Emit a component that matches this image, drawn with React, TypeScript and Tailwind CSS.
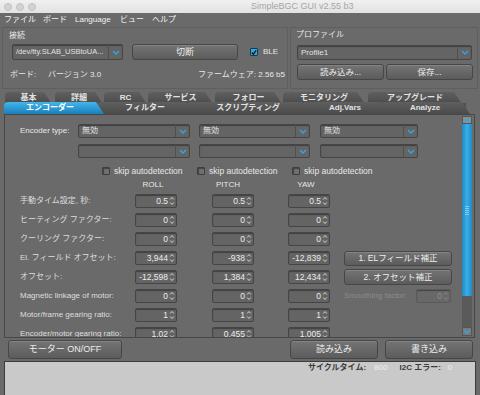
import React from 'react';

const F = "font-['Liberation_Sans','Noto_Sans_CJK_JP',sans-serif]";

const Chevron = ({ up = false }: { up?: boolean }) => (
  <svg width="8" height="5" viewBox="0 0 8 5" fill="none">
    <path d={up ? 'M1 4l3-3 3 3' : 'M1 1l3 3 3-3'} stroke="#2ea8e8" strokeWidth="1.4" />
  </svg>
);

const SpinArrows = ({ dim = false }: { dim?: boolean }) => (
  <svg width="6" height="12" viewBox="0 0 6 12" fill="none">
    <path d="M1.2 4.5l1.8-2 1.8 2" stroke={dim ? '#8a8a8a' : '#d4d4d4'} strokeWidth="1" />
    <path d="M1.2 7.5l1.8 2 1.8-2" stroke={dim ? '#8a8a8a' : '#d4d4d4'} strokeWidth="1" />
  </svg>
);

const Combo = ({ cls, text = '' }: { cls: string; text?: string }) => (
  <div className={`${cls} flex border border-[#454545] rounded-[2px] bg-[#646464] shadow-[inset_0_1px_1px_rgba(0,0,0,0.35)]`}>
    <div className="flex-1 flex items-center pl-[3px] text-[#e2e2e2] whitespace-nowrap overflow-hidden">{text}</div>
    <div className="w-[14px] border-l border-[#505050] flex items-center justify-center">
      <Chevron />
    </div>
  </div>
);

const Spin = ({ cls = 'w-[42px]', value, dim = false }: { cls?: string; value: string; dim?: boolean }) => (
  <div
    className={`${cls} h-[14px] flex border rounded-[2px] shadow-[inset_0_1px_1px_rgba(0,0,0,0.35)] ${
      dim ? 'border-[#5a5a5a] bg-[#686868] text-[#8e8e8e]' : 'border-[#454545] bg-[#646464] text-[#ececec]'
    }`}
  >
    <div className="flex-1 flex items-center justify-end text-[8.5px] whitespace-nowrap">{value}</div>
    <div className="w-[8px] flex items-center justify-center">
      <SpinArrows dim={dim} />
    </div>
  </div>
);

const Btn = ({ cls, label }: { cls: string; label: string }) => (
  <div
    className={`${cls} flex items-center justify-center rounded-[3px] border border-[#464646] bg-linear-to-b from-[#747474] to-[#5c5c5c] shadow-[inset_0_1px_0_rgba(255,255,255,0.12)] text-[#ededed] whitespace-nowrap`}
  >
    {label}
  </div>
);

const Check = ({ on = false }: { on?: boolean }) => (
  <div
    className={`w-[8px] h-[8px] shrink-0 rounded-[1px] border flex items-center justify-center ${
      on ? 'border-[#1e3a4a] bg-[#2ea8e8]' : 'border-[#3e3e3e] bg-[#707070] shadow-[inset_1px_1px_1px_rgba(0,0,0,0.4)]'
    }`}
  >
    {on && (
      <svg width="7" height="7" viewBox="0 0 7 7" fill="none">
        <path d="M1 3.5l1.8 2L6 1" stroke="#111" strokeWidth="1.4" />
      </svg>
    )}
  </div>
);

const Tab = ({ cls, label, active = false, z }: { cls: string; label: string; active?: boolean; z: number }) => (
  <div
    className={`${cls} relative h-full shrink-0 rounded-tl-[4px] flex items-center justify-center font-bold whitespace-nowrap [clip-path:polygon(0_0,calc(100%_-_8px)_0,100%_100%,0_100%)] ${
      active
        ? 'bg-linear-to-b from-[#42b6ec] to-[#1a7fba] text-white'
        : 'bg-linear-to-b from-[#5f5f5f] to-[#4b4b4b] text-[#e2e2e2]'
    }`}
    style={{ zIndex: z }}
  >
    {label}
  </div>
);

const rows: { label: string; v: [string, string, string] }[] = [
  { label: '手動タイム設定, 秒:', v: ['0.5', '0.5', '0.5'] },
  { label: 'ヒーティング ファクター:', v: ['0', '0', '0'] },
  { label: 'クーリング ファクター:', v: ['0', '0', '0'] },
  { label: 'El. フィールド オフセット:', v: ['3,944', '-938', '-12,839'] },
  { label: 'オフセット:', v: ['-12,598', '1,384', '12,434'] },
  { label: 'Magnetic linkage of motor:', v: ['0', '0', '0'] },
  { label: 'Motor/frame gearing ratio:', v: ['1', '1', '1'] },
  { label: 'Encoder/motor gearing ratio:', v: ['1.02', '0.455', '1.005'] },
];

export default function App() {
  return (
    <div className={`w-[480px] h-[395px] overflow-hidden bg-[#6a6a6a] text-[8px] leading-none text-[#e8e8e8] flex flex-col ${F}`}>
      {/* title bar */}
      <div className="h-[13px] shrink-0 flex items-center pl-[4px] bg-linear-to-b from-[#f0f0f0] to-[#e2e2e2]">
        <div className="w-[8px] h-[8px] rounded-full bg-[#d2d2d2] border border-[#c2c2c2]" />
        <div className="w-[8px] h-[8px] ml-[4px] rounded-full bg-[#d2d2d2] border border-[#c2c2c2]" />
        <div className="w-[8px] h-[8px] ml-[4px] rounded-full bg-[#d2d2d2] border border-[#c2c2c2]" />
        <div className="ml-[215px] text-[9px] text-[#a6a6a6]">SimpleBGC GUI v2.55 b3</div>
      </div>

      {/* menu bar */}
      <div className="h-[14px] shrink-0 flex items-center pl-[4px] text-[#f2f2f2]">
        <span className="w-[39px]">ファイル</span>
        <span className="w-[32px]">ボード</span>
        <span className="w-[45px]">Language</span>
        <span className="w-[32px]">ビュー</span>
        <span>ヘルプ</span>
      </div>

      {/* connection / profile */}
      <div className="h-[62px] shrink-0 flex px-[2px]">
        <div className="w-[286px] h-full border border-[#5f5f5f] flex flex-col">
          <div className="h-[10px] mt-[3px] ml-[6px] flex items-center">接続</div>
          <div className="mt-[3px] flex items-center">
            <Combo cls="ml-[9px] w-[111px] h-[16px] text-[7.5px]" text="/dev/tty.SLAB_USBtoUA..." />
            <Btn cls="ml-[9px] w-[106px] h-[16px] text-[9px]" label="切断" />
            <div className="ml-[12px]">
              <Check on />
            </div>
            <span className="ml-[5px]">BLE</span>
          </div>
          <div className="mt-[10px] h-[10px] flex items-center pl-[7px] pr-[2px]">
            <span className="w-[38px]">ボード:</span>
            <span>バージョン 3.0</span>
            <span className="ml-auto">ファームウェア: 2.56 b5</span>
          </div>
        </div>
        <div className="ml-[2px] flex-1 h-full border border-[#5f5f5f] flex flex-col pl-[6px]">
          <div className="h-[10px] mt-[2px] -ml-[1px] flex items-center">プロファイル</div>
          <Combo cls="mt-[5px] w-[175px] h-[15px]" text="Profile1" />
          <div className="mt-[4px] flex">
            <Btn cls="w-[87px] h-[16px] text-[8.5px]" label="読み込み..." />
            <Btn cls="ml-[2px] w-[87px] h-[16px] text-[8.5px]" label="保存..." />
          </div>
        </div>
      </div>

      {/* tabs */}
      <div className="mt-[3px] h-[12px] shrink-0 flex pl-[5px]">
        <Tab cls="w-[47px]" label="基本" z={1} />
        <Tab cls="ml-[3px] w-[48px]" label="詳細" z={1} />
        <Tab cls="ml-[1px] w-[43px]" label="RC" z={1} />
        <Tab cls="ml-[1px] w-[65px]" label="サービス" z={1} />
        <Tab cls="ml-[2px] w-[67px]" label="フォロー" z={1} />
        <Tab cls="ml-[1px] w-[82px]" label="モニタリング" z={1} />
        <Tab cls="ml-[3px] w-[94px]" label="アップグレード" z={1} />
      </div>
      <div className="-mt-[2px] h-[12px] shrink-0 flex pl-[4px] relative z-10">
        <Tab cls="w-[100px] -mr-[8px] pr-[8px]" label="エンコーダー" active z={6} />
        <Tab cls="w-[98px] -mr-[8px] pl-[8px] pr-[8px]" label="フィルター" z={5} />
        <Tab cls="w-[124px] -mr-[8px] pl-[8px] pr-[8px]" label="スクリプティング" z={4} />
        <Tab cls="w-[86px] -mr-[8px] pl-[8px] pr-[8px]" label="Adj.Vars" z={3} />
        <Tab cls="w-[90px] pl-[8px] pr-[8px]" label="Analyze" z={2} />
        <div className="w-[4px] h-[11px] mt-[1px] -ml-[8px] bg-[#505050]" />
      </div>

      {/* encoder panel */}
      <div className="ml-[4px] w-[471px] h-[224px] shrink-0 border border-[#474747] flex">
        <div className="flex-1 h-full overflow-hidden pl-[15px] pt-[9px] flex flex-col">
          <div className="h-[14px] shrink-0 flex items-center">
            <span className="w-[58px]">Encoder type:</span>
            <Combo cls="w-[112px] h-[14px]" text="無効" />
            <Combo cls="ml-[9px] w-[111px] h-[14px]" text="無効" />
            <Combo cls="ml-[10px] w-[98px] h-[14px]" text="無効" />
          </div>
          <div className="mt-[6px] h-[14px] shrink-0 flex">
            <span className="w-[58px]" />
            <Combo cls="w-[112px] h-[14px]" />
            <Combo cls="ml-[9px] w-[111px] h-[14px]" />
            <Combo cls="ml-[10px] w-[98px] h-[14px]" />
          </div>
          <div className="mt-[7px] h-[12px] shrink-0 flex items-center pl-[82px]">
            {[0, 1, 2].map((i) => (
              <div key={i} className="w-[95px] flex items-center">
                <Check />
                <span className="ml-[4px] text-[8.5px]">skip autodetection</span>
              </div>
            ))}
          </div>
          <div className="mt-[3px] h-[10px] shrink-0 flex items-center">
            <span className="w-[113px]" />
            <span className="w-[40px] text-center">ROLL</span>
            <span className="ml-[35px] w-[40px] text-center">PITCH</span>
            <span className="ml-[38px] w-[40px] text-center">YAW</span>
          </div>
          {rows.map((r, i) => (
            <div key={r.label} className={`${i === 0 ? 'mt-[4px]' : 'mt-[5px]'} h-[14px] shrink-0 flex items-start`}>
              <span className="w-[115px] h-[14px] flex items-center whitespace-nowrap text-[#dedede]">{r.label}</span>
              <Spin value={r.v[0]} />
              <Spin cls="ml-[35px] w-[42px]" value={r.v[1]} />
              <Spin cls="ml-[34px] w-[42px]" value={r.v[2]} />
              {i === 3 && <Btn cls="ml-[14px] w-[108px] h-[15px] text-[8.5px] relative z-10" label="1. ELフィールド補正" />}
              {i === 4 && <Btn cls="ml-[14px] -mt-[1px] w-[108px] h-[16px] text-[8.5px]" label="2. オフセット補正" />}
              {i === 5 && (
                <div className="ml-[14px] w-[108px] h-[14px] flex items-center">
                  <span className="w-[72px] text-[#8c8c8c] whitespace-nowrap">Smoothing factor:</span>
                  <Spin cls="w-[35px]" value="0" dim />
                </div>
              )}
            </div>
          ))}
        </div>
        {/* scrollbar */}
        <div className="w-[10px] mr-[2px] py-[1px] flex flex-col">
          <div className="h-[8px] flex items-center justify-center bg-[#8e8e8e] border border-[#555]">
            <Chevron up />
          </div>
          <div className="h-[172px] bg-linear-to-r from-[#1f8ac6] via-[#39aee6] to-[#1f8ac6] flex items-center justify-center">
            <div className="w-[4px] h-[10px] bg-[repeating-linear-gradient(0deg,#7fcdf2_0px,#7fcdf2_1px,transparent_1px,transparent_2px)]" />
          </div>
          <div className="flex-1 bg-[#5a5a5a]" />
          <div className="h-[9px] flex items-center justify-center bg-[#7a7a7a] border border-[#555]">
            <Chevron />
          </div>
        </div>
      </div>

      {/* bottom buttons */}
      <div className="mt-[2px] h-[19px] shrink-0 flex">
        <Btn cls="ml-[8px] w-[114px] h-[19px] text-[9px]" label="モーター ON/OFF" />
        <Btn cls="ml-[168px] w-[88px] h-[19px] text-[9px]" label="読み込み" />
        <Btn cls="ml-[7px] w-[88px] h-[19px] text-[9px]" label="書き込み" />
      </div>

      {/* status */}
      <div className="mt-[2px] ml-[4px] w-[472px] flex-1 border-t border-l border-r border-[#3c3c3c] bg-[#c9c9c9] pt-[1px]">
        <div className="h-[10px] flex items-center pl-[303px] font-bold text-[#3a3a3a]">
          <span>サイクルタイム:</span>
          <span className="ml-[8px] font-normal text-[#ededed]">800</span>
          <span className="ml-[12px]">I2C エラー:</span>
          <span className="ml-[7px] font-normal text-[#ededed]">0</span>
        </div>
      </div>
    </div>
  );
}
